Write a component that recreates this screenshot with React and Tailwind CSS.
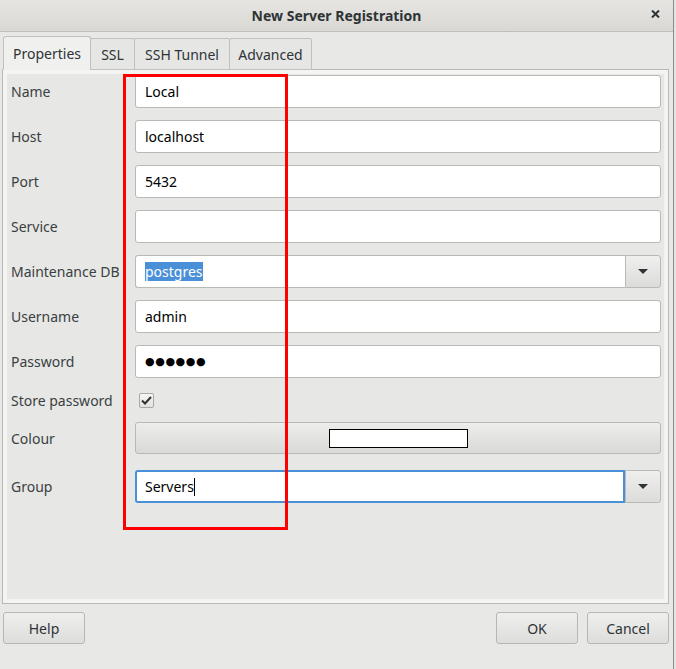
import React from "react";

const Field = ({ children, className = "" }) => (
  <div
    className={`h-full w-full bg-white border border-[#b9b9b6] rounded-[3px] px-[9px] flex items-center text-black ${className}`}
  >
    {children}
  </div>
);

const Caret = () => (
  <svg width="10" height="6" viewBox="0 0 10 6">
    <path d="M0 0 L10 0 L5 5 Z" fill="#2e3436" />
  </svg>
);

const DropButton = () => (
  <div className="h-full w-[36px] shrink-0 flex items-center justify-center border border-[#b9b9b6] rounded-r-[3px] bg-gradient-to-b from-[#efefee] to-[#dcdcda]">
    <Caret />
  </div>
);

const Row = ({ label, h = "h-[33px]", mt = "mt-[12px]", children }) => (
  <div className={`flex items-center ${h} ${mt}`}>
    <div className="w-[128px] pl-[4px] shrink-0 text-[#3a3f41]">{label}</div>
    <div className="flex-1 h-full flex items-center">{children}</div>
  </div>
);

const tabs = [
  { name: "Properties", w: "w-[88px]", active: true },
  { name: "SSL", w: "w-[45px]" },
  { name: "SSH Tunnel", w: "w-[96px]" },
  { name: "Advanced", w: "w-[83px]" },
];

export default function App() {
  return (
    <div className="relative w-[676px] h-[669px] overflow-hidden flex bg-[#e8e8e7] text-[14px] text-[#2e3436] font-['Noto_Sans',sans-serif]">
      <div className="w-[673px] h-full flex flex-col">
        {/* title bar */}
        <div className="h-[32px] shrink-0 relative flex items-center justify-center border-b border-[#c2c0bb] bg-gradient-to-b from-[#e6e5e2] to-[#dad8d4]">
          <span className="font-bold text-[14px] text-[#2e3436]">New Server Registration</span>
          <svg className="absolute left-[651px] top-[10px]" width="9" height="8" viewBox="0 0 9 8">
            <path d="M1 0.5 L8 7.5 M8 0.5 L1 7.5" stroke="#2e3436" strokeWidth="2" />
          </svg>
        </div>

        {/* tabs */}
        <div className="flex items-end pt-[3px] pl-[3px] h-[38px] shrink-0 relative z-10">
          {tabs.map((t) => (
            <div
              key={t.name}
              className={`${t.w} flex items-center justify-center border border-[#c0c0bd] -ml-px first:ml-0 ${
                t.active
                  ? "h-[34px] rounded-t-[3px] bg-[#f0f0ef] border-b-[#f0f0ef]"
                  : "h-[32px] bg-[#e6e6e5] rounded-t-[2px]"
              }`}
            >
              {t.name}
            </div>
          ))}
        </div>

        {/* panel */}
        <div className="flex-1 -mt-px ml-[2px] mr-[4px] border border-[#b9b9b6] bg-[#f4f4f3] p-[4px] flex">
          <div className="flex-1 bg-[#e7e7e6] pr-[3px] pt-px">
            <Row label="Name" mt="mt-0">
              <Field>Local</Field>
            </Row>
            <Row label="Host">
              <Field>localhost</Field>
            </Row>
            <Row label="Port">
              <Field>5432</Field>
            </Row>
            <Row label="Service">
              <Field />
            </Row>
            <Row label="Maintenance DB">
              <Field className="rounded-r-none border-r-0">
                <span className="bg-[#4a90d9] text-white leading-[19px]">postgres</span>
              </Field>
              <DropButton />
            </Row>
            <Row label="Username">
              <Field>admin</Field>
            </Row>
            <Row label="Password">
              <Field>
                <span className="font-['DejaVu_Sans',sans-serif] text-[11px] tracking-[0.6px] leading-none">●●●●●●</span>
              </Field>
            </Row>
            <Row label="Store password" h="h-[44px]" mt="mt-0">
              <div className="ml-[4px] w-[15px] h-[15px] border border-[#a8a8a5] rounded-[2px] bg-gradient-to-b from-[#f6f6f5] to-[#e2e2e0] flex items-center justify-center">
                <svg width="11" height="9" viewBox="0 0 11 9">
                  <path d="M1 4.5 L4 7.5 L10 1" stroke="#2e3436" strokeWidth="2" fill="none" />
                </svg>
              </div>
            </Row>
            <Row label="Colour" h="h-[32px]" mt="mt-0">
              <div className="h-full w-full border border-[#b9b9b6] rounded-[3px] bg-gradient-to-b from-[#ededec] to-[#d9d9d7] flex items-center justify-center">
                <div className="w-[139px] h-[19px] bg-white border border-black" />
              </div>
            </Row>
            <Row label="Group" mt="mt-[16px]">
              <div className="h-full flex-1 bg-white border-2 border-[#4a90d9] rounded-l-[3px] px-[8px] flex items-center text-black">
                Servers
                <span className="inline-block w-px h-[18px] bg-black" />
              </div>
              <DropButton />
            </Row>
          </div>
        </div>

        {/* buttons */}
        <div className="h-[65px] shrink-0 flex items-start pt-[8px] pl-[3px] pr-[4px]">
          <button className="w-[82px] h-[32px] border border-[#b6b6b3] rounded-[3px] bg-gradient-to-b from-[#efefee] to-[#dddddb] text-[#2e3436]">
            Help
          </button>
          <div className="flex-1" />
          <button className="w-[82px] h-[32px] border border-[#b6b6b3] rounded-[3px] bg-gradient-to-b from-[#efefee] to-[#dddddb] text-[#2e3436]">
            OK
          </button>
          <button className="ml-[9px] w-[82px] h-[32px] border border-[#b6b6b3] rounded-[3px] bg-gradient-to-b from-[#efefee] to-[#dddddb] text-[#2e3436]">
            Cancel
          </button>
        </div>
      </div>
      <div className="w-[3px] h-full border-l border-[#8c8c8a] bg-[#e4e4e3]" />

      {/* annotation box */}
      <div className="absolute left-[123px] top-[74px] w-[165px] h-[456px] border-[3px] border-[#ff0000] pointer-events-none" />
    </div>
  );
}
